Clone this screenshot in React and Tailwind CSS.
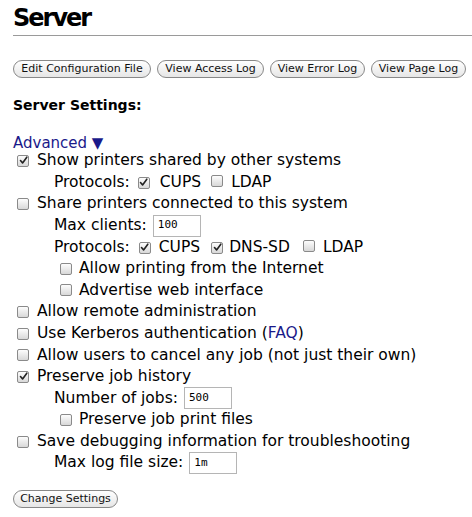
import React from "react";

const font = { fontFamily: '"DejaVu Sans", Verdana, sans-serif' };

function Box({ checked }) {
  return (
    <span className="inline-flex items-center justify-center w-[12px] h-[12px] rounded-[2px] border border-[#8a8a8a] bg-gradient-to-b from-[#fdfdfd] to-[#d8d8d8] shrink-0">
      {checked && (
        <svg width="9" height="9" viewBox="0 0 9 9" className="-mt-[1px]">
          <path d="M1.5 4.5 L3.6 7 L7.8 1.2" fill="none" stroke="#222" strokeWidth="1.6" strokeLinecap="round" strokeLinejoin="round" />
        </svg>
      )}
    </span>
  );
}

function Btn({ children, className = "" }) {
  return (
    <span className={"inline-flex items-center justify-center h-[18px] rounded-full border border-[#888] bg-gradient-to-b from-[#ffffff] to-[#e6e6e6] text-[11px] text-[#111] " + className}>
      {children}
    </span>
  );
}

function Row({ children, className = "" }) {
  return <div className={"flex items-center h-[21.6px] whitespace-nowrap " + className}>{children}</div>;
}

function Input({ value, className = "" }) {
  return (
    <span
      className={"inline-flex items-center h-[22px] w-[48px] border border-[#b5b5b5] bg-white pl-[4px] text-[11px] text-black " + className}
      style={{ fontFamily: '"DejaVu Sans Mono", monospace' }}
    >
      {value}
    </span>
  );
}

export default function App() {
  return (
    <div className="w-[472px] h-[517px] bg-white text-black overflow-hidden" style={font}>
      <div className="pl-[13px]">
        <h1 className="text-[24px] font-bold leading-none pt-[6px] pb-[5px] tracking-[-2px]">Server</h1>
        <div className="h-px bg-[#9a9a9a]" />
        <div className="flex gap-[6px] mt-[24px]">
          <Btn className="w-[138px]">Edit Configuration File</Btn>
          <Btn className="w-[107px]">View Access Log</Btn>
          <Btn className="w-[95px]">View Error Log</Btn>
          <Btn className="w-[95px]">View Page Log</Btn>
        </div>
        <div className="mt-[20px] text-[14px] font-bold leading-none">Server Settings:</div>
        <div className="mt-[24px] text-[15px] leading-none text-[#1a1a8a]">Advanced ▼</div>
        <div className="text-[15.5px] text-black mt-[-1px]">
          <Row className="pl-[4px] gap-[8px]"><Box checked /> <span>Show printers shared by other systems</span></Row>
          <Row className="pl-[41px]">
            <span>Protocols:</span>
            <span className="ml-[8px]"><Box checked /></span>
            <span className="ml-[10px]">CUPS</span>
            <span className="ml-[10px]"><Box /></span>
            <span className="ml-[8px]">LDAP</span>
          </Row>
          <Row className="pl-[4px] gap-[8px]"><Box /> <span>Share printers connected to this system</span></Row>
          <Row className="pl-[41px]">
            <span>Max clients:</span>
            <Input value="100" className="ml-[6px]" />
          </Row>
          <Row className="pl-[41px]">
            <span>Protocols:</span>
            <span className="ml-[9px]"><Box checked /></span>
            <span className="ml-[8px]">CUPS</span>
            <span className="ml-[11px]"><Box checked /></span>
            <span className="ml-[6px]">DNS-SD</span>
            <span className="ml-[13px]"><Box /></span>
            <span className="ml-[8px]">LDAP</span>
          </Row>
          <Row className="pl-[47px] gap-[7px]"><Box /> <span>Allow printing from the Internet</span></Row>
          <Row className="pl-[47px] gap-[7px]"><Box /> <span>Advertise web interface</span></Row>
          <Row className="pl-[4px] gap-[8px]"><Box /> <span>Allow remote administration</span></Row>
          <Row className="pl-[4px] gap-[8px]"><Box /> <span>Use Kerberos authentication (<span className="text-[#1a1a8a]">FAQ</span>)</span></Row>
          <Row className="pl-[4px] gap-[8px]"><Box /> <span>Allow users to cancel any job (not just their own)</span></Row>
          <Row className="pl-[4px] gap-[8px]"><Box checked /> <span>Preserve job history</span></Row>
          <Row className="pl-[41px]">
            <span>Number of jobs:</span>
            <Input value="500" className="ml-[6px]" />
          </Row>
          <Row className="pl-[47px] gap-[7px]"><Box /> <span>Preserve job print files</span></Row>
          <Row className="pl-[4px] gap-[8px]"><Box /> <span>Save debugging information for troubleshooting</span></Row>
          <Row className="pl-[41px]">
            <span>Max log file size:</span>
            <Input value="1m" className="ml-[6px]" />
          </Row>
        </div>
        <div className="mt-[11px]">
          <Btn className="w-[105px]">Change Settings</Btn>
        </div>
      </div>
    </div>
  );
}
